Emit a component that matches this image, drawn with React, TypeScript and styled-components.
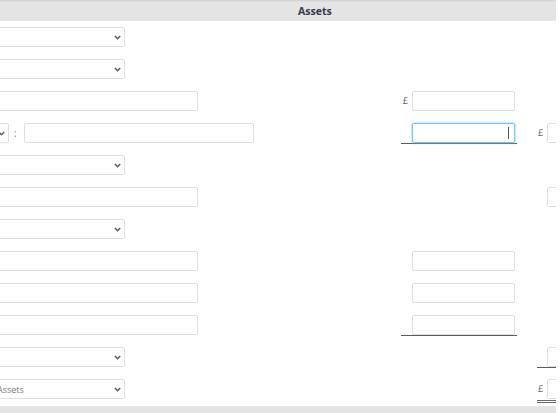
import React from "react";
import styled, { createGlobalStyle, css } from "styled-components";

const GlobalStyle = createGlobalStyle`
	html, body {
		margin: 0;
		padding: 0;
		background: #fff;
		font-family: "Open Sans", "Liberation Sans", sans-serif;
		overflow: hidden;
	}
`;

const Viewport = styled.div`
	width: 556px;
	height: 413px;
	overflow: hidden;
	display: flex;
	flex-direction: column;
`;

const HeaderBar = styled.div`
	height: 21px;
	flex: none;
	background: #e4e4e4;
	box-shadow: inset 0 2px 2px -1px #cfcfcf;
	display: flex;
	align-items: center;
	padding-left: 298px;
	box-sizing: border-box;
	font-size: 10.5px;
	font-weight: 700;
	color: #2f3d4c;
`;

const Sheet = styled.div`
	margin-left: -10px;
	display: flex;
	flex-direction: column;
`;

const Row = styled.div`
	height: 32px;
	box-sizing: border-box;
	padding-top: 6px;
	display: grid;
	grid-template-columns: 411px 116px 20px 40px;
	align-items: start;
`;

const LeftCell = styled.div`
	display: flex;
	align-items: center;
	gap: 4px;
`;

const AmountCell = styled.div<{ $rule?: "single" | "double" }>`
	display: flex;
	align-items: center;
	justify-content: flex-end;
	gap: 4px;
	padding-right: 2px;
	box-sizing: border-box;
	${(p) =>
		p.$rule === "single" &&
		css`
			border-bottom: 1px solid #5a5a5a;
		`}
	${(p) =>
		p.$rule === "double" &&
		css`
			padding-bottom: 1px;
			border-bottom: 3px double #6a6a6a;
		`}
`;

const TotalCell = styled(AmountCell)`
	grid-column: 4;
	justify-content: flex-start;
	padding-right: 0;
	gap: 4px;
	padding-left: 1px;
`;

const Pound = styled.span<{ $hidden?: boolean }>`
	font-size: 9px;
	color: #666;
	line-height: 20px;
	visibility: ${(p) => (p.$hidden ? "hidden" : "visible")};
`;

const Colon = styled.span`
	font-size: 10px;
	color: #777;
	padding: 0 3px 0 1px;
`;

const fieldBase = css`
	height: 20px;
	box-sizing: border-box;
	border: 1px solid #dedede;
	border-radius: 2px;
	background: #fff;
	font-family: "Open Sans", "Liberation Sans", sans-serif;
	font-size: 9px;
	color: #777;
	outline: none;
	padding: 0 6px;
`;

const TextField = styled.input<{ $w: number }>`
	${fieldBase}
	width: ${(p) => p.$w}px;
`;

const Amount = styled.input<{ $focused?: boolean }>`
	${fieldBase}
	width: 103px;
	text-align: right;
	${(p) =>
		p.$focused &&
		css`
			border-color: #7cc3f2;
			box-shadow: 0 0 2px 1px rgba(124, 195, 242, 0.45);
		`}
`;

// caret drawn over the active amount field
const FocusWrap = styled.div`
	position: relative;
	display: flex;

	&::after {
		content: "";
		position: absolute;
		right: 6px;
		top: 4px;
		width: 1px;
		height: 12px;
		background: #555;
	}
`;

const SelectBox = styled.div<{ $w: number }>`
	${fieldBase}
	width: ${(p) => p.$w}px;
	display: flex;
	align-items: center;
	justify-content: space-between;
	padding: 0 3px 0 6px;
`;

const Chevron = () => (
	<svg width="7" height="5" viewBox="0 0 7 5">
		<path d="M0.8 1 L3.5 3.8 L6.2 1" fill="none" stroke="#555" strokeWidth="1.4" />
	</svg>
);

const Select = ({ w, label }: { w: number; label?: string }) => (
	<SelectBox $w={w}>
		<span>{label}</span>
		<Chevron />
	</SelectBox>
);

const FooterBar = styled.div`
	height: 7px;
	margin-top: auto;
	background: #e4e4e4;
	flex: none;
`;

function App() {
	return (
		<Viewport>
			<GlobalStyle />
			<HeaderBar>Assets</HeaderBar>
			<Sheet>
				<Row>
					<LeftCell>
						<Select w={135} />
					</LeftCell>
				</Row>
				<Row>
					<LeftCell>
						<Select w={135} />
					</LeftCell>
				</Row>
				<Row>
					<LeftCell>
						<TextField $w={208} />
					</LeftCell>
					<AmountCell>
						<Pound>£</Pound>
						<Amount />
					</AmountCell>
				</Row>
				<Row>
					<LeftCell>
						<Select w={19} />
						<Colon>:</Colon>
						<TextField $w={230} />
					</LeftCell>
					<AmountCell $rule="single">
						<FocusWrap>
							<Amount $focused />
						</FocusWrap>
					</AmountCell>
					<TotalCell>
						<Pound>£</Pound>
						<Amount />
					</TotalCell>
				</Row>
				<Row>
					<LeftCell>
						<Select w={135} />
					</LeftCell>
				</Row>
				<Row>
					<LeftCell>
						<TextField $w={208} />
					</LeftCell>
					<TotalCell>
						<Pound $hidden>£</Pound>
						<Amount />
					</TotalCell>
				</Row>
				<Row>
					<LeftCell>
						<Select w={135} />
					</LeftCell>
				</Row>
				<Row>
					<LeftCell>
						<TextField $w={208} />
					</LeftCell>
					<AmountCell>
						<Amount />
					</AmountCell>
				</Row>
				<Row>
					<LeftCell>
						<TextField $w={208} />
					</LeftCell>
					<AmountCell>
						<Amount />
					</AmountCell>
				</Row>
				<Row>
					<LeftCell>
						<TextField $w={208} />
					</LeftCell>
					<AmountCell $rule="single">
						<Amount />
					</AmountCell>
				</Row>
				<Row>
					<LeftCell>
						<Select w={135} />
					</LeftCell>
					<TotalCell $rule="single">
						<Pound $hidden>£</Pound>
						<Amount />
					</TotalCell>
				</Row>
				<Row>
					<LeftCell>
						<Select w={135} label="Assets" />
					</LeftCell>
					<TotalCell $rule="double">
						<Pound>£</Pound>
						<Amount />
					</TotalCell>
				</Row>
			</Sheet>
			<FooterBar />
		</Viewport>
	);
}

export default App;
